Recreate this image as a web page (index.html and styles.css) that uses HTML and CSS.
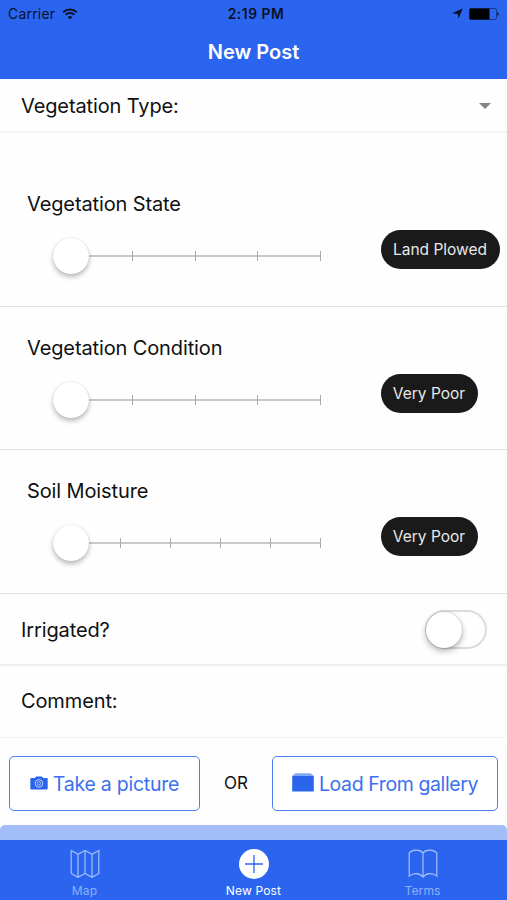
FILE: index.html
```html
<!DOCTYPE html>
<html lang="en">
<head>
<meta charset="utf-8">
<title>New Post</title>
<link rel="stylesheet" href="styles.css">
</head>
<body>
<header class="header">
  <div class="status">
    <div class="status-left"><span class="carrier">Carrier</span>
      <svg width="16" height="12" viewBox="0 0 16 12" fill="none" stroke="#081226" stroke-width="2"><path d="M1.2 4.3a9.8 9.8 0 0 1 13.6 0M3.7 6.8a6.2 6.2 0 0 1 8.6 0"/><path d="M5.7 9a3.4 3.4 0 0 1 4.6 0L8 11.4z" fill="#081226" stroke="none"/></svg>
    </div>
    <span class="time">2:19 PM</span>
    <div class="status-right">
      <svg width="11" height="11" viewBox="0 0 11 11"><path d="M10.8.4 6.5 10.6 5.7 6 .2 5.3z" fill="#081226"/></svg>
      <svg width="30" height="12" viewBox="0 0 30 12"><rect x=".5" y=".5" width="27" height="11" rx="1.5" fill="none" stroke="#17398e"/><rect x=".5" y=".5" width="20" height="11" rx="1" fill="#000"/><path d="M28.3 4v4q1.4-.5 1.4-2t-1.4-2" fill="#081226"/></svg>
    </div>
  </div>
  <h1 class="title">New Post</h1>
</header>
<main>
  <div class="row row-type"><span class="label">Vegetation Type:</span><i class="caret"></i></div>
  <section class="range range-first">
    <h2 class="label">Vegetation State</h2>
    <div class="range-body">
      <div class="slider"><i class="knob"></i><i class="tick"></i><i class="tick"></i><i class="tick"></i><i class="tick"></i></div>
      <span class="badge badge-wide">Land Plowed</span>
    </div>
  </section>
  <section class="range">
    <h2 class="label">Vegetation Condition</h2>
    <div class="range-body">
      <div class="slider"><i class="knob"></i><i class="tick"></i><i class="tick"></i><i class="tick"></i><i class="tick"></i></div>
      <span class="badge">Very Poor</span>
    </div>
  </section>
  <section class="range range-last">
    <h2 class="label">Soil Moisture</h2>
    <div class="range-body">
      <div class="slider"><i class="knob"></i><i class="tick"></i><i class="tick"></i><i class="tick"></i><i class="tick"></i><i class="tick"></i></div>
      <span class="badge">Very Poor</span>
    </div>
  </section>
  <div class="row row-irrigated"><span class="label">Irrigated?</span><span class="toggle"><i class="toggle-knob"></i></span></div>
  <div class="row row-comment"><span class="label">Comment:</span></div>
  <div class="actions">
    <button class="btn btn-camera">
      <svg width="18" height="14" viewBox="0 0 18 14"><path d="M1.4 2h3.3L6.3.4h5.4L13.3 2h3.3q1.1 0 1.1 1.1v9.1q0 1.2-1.1 1.2H1.4q-1.1 0-1.1-1.2V3.1Q.3 2 1.4 2z" fill="#2b65ee"/><circle cx="9" cy="7.4" r="3.8" fill="none" stroke="#c3d5fb"/><circle cx="9" cy="7.4" r="1.6" fill="none" stroke="#a9c4fa"/></svg>
      <span class="take">Take a picture</span>
    </button>
    <span class="or">OR</span>
    <button class="btn btn-gallery">
      <svg width="22" height="19" viewBox="0 0 22 19"><path d="M0 3h22L18.5.3h-15z" fill="#84a8f5"/><path d="M.2 3h21.6v15.5H.2z" fill="#2b65ee"/></svg>
      <span class="load">Load From gallery</span>
    </button>
  </div>
  <div class="submit"></div>
</main>
<nav class="tabs">
  <a class="tab"><svg width="30" height="30" viewBox="0 0 30 30" fill="none" stroke="#a4c0f9" stroke-width="1.2"><path d="M1.2 1.5 8 5.3l7-3.8 7 3.8 6.8-3.8V24.5L22 28.2l-7-3.7-7 3.7-6.8-3.7zM8 5.3v22.9M15 1.5v23M22 5.3v22.9"/></svg><span>Map</span></a>
  <a class="tab active"><svg width="30" height="30" viewBox="0 0 30 30"><circle cx="15" cy="15" r="15" fill="#fff"/><path d="M15 6v18M6 15h18" stroke="#2b65ee" stroke-width="1.3"/></svg><span>New Post</span></a>
  <a class="tab"><svg width="30" height="30" viewBox="0 0 30 30" fill="none" stroke="#a4c0f9" stroke-width="1.2"><path d="M15 3.8C12.2.1 4.3.2 1.2 3.8v23.3c4-3.5 10.5-3.4 13.8 1 3.3-4.4 9.8-4.5 13.8-1V3.8C25.7.2 17.8.1 15 3.8zM15 3.8v24.3"/></svg><span>Terms</span></a>
</nav>
</body>
</html>
```
FILE: styles.css
```css
* { box-sizing: border-box; }
body { margin: 0; height: 900px; overflow: hidden; display: flex; flex-direction: column; background: #fefefe; color: #101010; font-family: Inter, "Liberation Sans", sans-serif; }
.header { height: 79px; background: #2b65ef; flex: none; }
.status { height: 27px; padding: 0 8px; display: grid; grid-template-columns: 1fr auto 1fr; align-items: center; color: #081226; }
.status-left, .status-right { display: flex; align-items: center; }
.status-left { gap: 7px; }
.status-right { justify-content: flex-end; gap: 6px; }
.carrier { font-size: 13.8px; letter-spacing: .3px; }
.time { font-size: 13.8px; font-weight: 600; letter-spacing: .55px; padding-left: 5px; }
.title { margin: 0; height: 50px; line-height: 50px; text-align: center; color: #fff; font-size: 20px; font-weight: 600; }
main { flex: 1; display: flex; flex-direction: column; }
.label { margin: 0; font-size: 20px; font-weight: 400; line-height: 24px; letter-spacing: -.12px; white-space: nowrap; }
.row { display: flex; align-items: center; justify-content: space-between; padding: 0 21px; flex: none; }
.row-type { height: 54px; border-bottom: 2px solid #f3f3f3; padding-right: 16px; padding-top: 1px; }
.caret { border: 6px solid transparent; border-top: 6px solid #858585; border-bottom: 0; }
.range { height: 143px; border-bottom: 1px solid #e2e2e2; padding: 29px 8px 0 27px; flex: none; }
.range-first { height: 174px; padding-top: 59px; }
.range-last { height: 144px; }
.range-body { display: flex; height: 40px; margin-top: 14px; align-items: flex-start; }
.slider { margin: 25px 60px 0 43.5px; width: 250px; height: 2px; background: #c9c9c9; display: flex; align-items: center; flex: none; }
.knob { width: 36px; height: 36px; margin: 0 -18px; border-radius: 50%; background: #fff; box-shadow: 0 3px 5px rgba(0,0,0,.27), 0 0 1px rgba(0,0,0,.18); flex: none; position: relative; }
.tick { flex: 1; height: 10px; border-right: 1px solid #aaa; }
.badge { width: 97px; height: 39px; line-height: 39px; border-radius: 20px; background: #1a1a1a; color: #e8e8e8; font-size: 15.5px; text-align: center; white-space: nowrap; flex: none; }
.badge-wide { width: 119px; }
.row-irrigated { height: 72px; border-bottom: 2px solid #eee; padding-right: 20px; padding-top: 1px; }
.row-comment { height: 72px; border-bottom: 1px solid #f3f3f3; padding-bottom: 1px; }
.toggle { width: 62px; height: 39px; border: 2px solid #dcdcdc; border-radius: 20px; display: flex; align-items: center; }
.toggle-knob { width: 36px; height: 36px; margin-left: -1px; border-radius: 50%; background: #fff; box-shadow: 0 3px 6px rgba(0,0,0,.3), 0 0 2px rgba(0,0,0,.22); flex: none; }
.actions { display: flex; padding: 18px 9px 0; height: 87px; justify-content: space-between; flex: none; }
.btn { height: 55px; border: 1px solid #4c7df1; border-radius: 5px; background: #fff; color: #3b70ef; font-family: inherit; font-size: 19.5px; padding: 0; display: flex; align-items: center; justify-content: center; white-space: nowrap; flex: none; }
.btn svg { margin-top: -2px; }
.btn-camera { width: 191px; gap: 5px; }
.btn-gallery { width: 226px; gap: 5px; }
.take { letter-spacing: -.25px; }
.load { letter-spacing: -.4px; }
.or { font-size: 17px; line-height: 54px; }
.submit { flex: 1; background: #a2bdf7; border-radius: 5px 5px 0 0; }
.tabs { height: 60px; background: #2b65ef; display: grid; grid-template-columns: repeat(3, 1fr); flex: none; }
.tab { display: flex; flex-direction: column; align-items: center; padding-top: 9px; color: #8fb0f7; font-size: 12px; letter-spacing: .15px; line-height: 14px; gap: 5px; }
.active { color: #fff; }
```
